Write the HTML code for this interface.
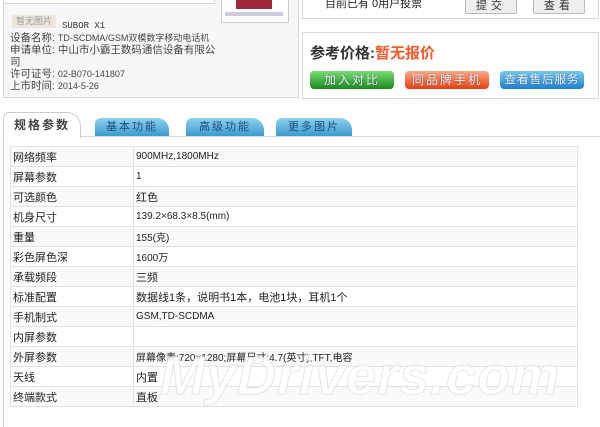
<!DOCTYPE html>
<html><head><meta charset="utf-8"><style>
body{margin:0;width:600px;height:413px;overflow:hidden;background:#fff;font-family:"Liberation Sans","Noto Sans CJK SC",sans-serif;font-size:11px;color:#333;position:relative}
.a{position:absolute}
.box{position:absolute;border:1px solid #d8d8d8;background:#f7f7f7}
.btn{position:absolute;height:18px;border-radius:4px;color:#eef;font-size:12px;text-align:center;line-height:18px;letter-spacing:2px;white-space:nowrap;overflow:hidden;text-shadow:0 0 2px rgba(0,0,0,.4)}
.tab{position:absolute;top:118px;height:18px;background:linear-gradient(#8fd0f0,#3c9ad0);color:#1b4f7a;font-size:11px;line-height:18px;text-align:center;letter-spacing:2px;border-radius:6px 12px 0 0}
table{position:absolute;left:10px;top:146px;width:568px;border-collapse:collapse;font-size:10px}
td{border:1px solid #e2e2e2;height:19px;padding:0 0 0 2px;color:#222;background:#fff}
td.l{width:120px;font-size:11px}
tr:nth-child(odd) td{background:#fafafa}
</style></head><body>
<div class="box" style="left:3px;top:-1px;width:294px;height:97px"></div>
<div class="a" style="left:3px;top:-1px;width:210px;height:3px;border:1px solid #d8d8d8;background:#fff"></div>
<div class="a" style="left:221px;top:-1px;width:66px;height:22px;border:1px solid #ccc;background:#fff"></div>
<div class="a" style="left:236px;top:-1px;width:36px;height:10px;background:#a0283a"></div>
<div class="a" style="left:225px;top:12px;width:58px;height:4px;background:#99b;opacity:.5"></div>
<div class="a" style="left:12px;top:15px;width:44px;height:13px;background:#eee8dc;color:#999;font-size:9px;line-height:13px;text-align:center">暂无图片</div>
<div class="a" style="left:62px;top:21px;font-size:9px;color:#333;font-family:'Liberation Mono',monospace">SUBOR X1</div>
<div class="a" style="left:10px;top:32px;line-height:12px;font-size:10.5px;color:#444">设备名称: <span style="font-size:9px">TD-SCDMA/GSM双模数字移动电话机</span><br>申请单位: 中山市小霸王数码通信设备有限公<br>司<br>许可证号: <span style="font-size:9px">02-B070-141807</span><br>上市时间: <span style="font-size:9px">2014-5-26</span></div>
<div class="box" style="left:302px;top:-1px;width:295px;height:18px;background:#fff"></div>
<div class="a" style="left:325px;top:-5px;font-size:11px;color:#222">目前已有 0用户投票</div>
<div class="a" style="left:465px;top:-2px;width:50px;height:14px;border:1px solid #bbb;border-radius:2px;background:#eee;font-size:11px;text-align:center;line-height:14px;letter-spacing:4px">提交</div>
<div class="a" style="left:533px;top:-2px;width:50px;height:14px;border:1px solid #bbb;border-radius:2px;background:#eee;font-size:11px;text-align:center;line-height:14px;letter-spacing:4px">查看</div>
<div class="box" style="left:302px;top:32px;width:295px;height:65px;background:#fff"></div>
<div class="a" style="left:310px;top:42px;font-size:15px;font-weight:bold;color:#333">参考价格:<span style="color:#f05a28">暂无报价</span></div>
<div class="btn" style="left:310px;top:71px;width:84px;background:linear-gradient(#7d7,#1d8a1d)">加入对比</div>
<div class="btn" style="left:405px;top:71px;width:84px;background:linear-gradient(#fa8,#e5400d)">同品牌手机</div>
<div class="btn" style="left:500px;top:71px;width:84px;letter-spacing:1px;font-size:11.5px;background:linear-gradient(#7ce,#1e7fd0)">查看售后服务</div>
<div class="a" style="left:3px;top:136px;width:600px;height:290px;border-left:1px solid #d8d8d8;border-top:1px solid #d8d8d8"></div>
<div class="a" style="left:3px;top:112px;width:76px;height:25px;background:#fff;border:1px solid #ccc;border-bottom:none;border-radius:6px 14px 0 0;font-weight:bold;font-size:12px;color:#444;line-height:25px;text-align:center;letter-spacing:2px">规格参数</div>
<div class="tab" style="left:95px;width:74px">基本功能</div>
<div class="tab" style="left:186px;width:78px">高级功能</div>
<div class="tab" style="left:276px;width:76px">更多图片</div>
<table>
<tr><td class="l">网络频率</td><td>900MHz,1800MHz</td></tr>
<tr><td class="l">屏幕参数</td><td>1</td></tr>
<tr><td class="l">可选颜色</td><td style="font-size:11px">红色</td></tr>
<tr><td class="l">机身尺寸</td><td>139.2×68.3×8.5(mm)</td></tr>
<tr><td class="l">重量</td><td>155(克)</td></tr>
<tr><td class="l">彩色屏色深</td><td>1600万</td></tr>
<tr><td class="l">承载频段</td><td style="font-size:11px">三频</td></tr>
<tr><td class="l">标准配置</td><td style="font-size:11px">数据线1条，说明书1本，电池1块，耳机1个</td></tr>
<tr><td class="l">手机制式</td><td>GSM,TD-SCDMA</td></tr>
<tr><td class="l">内屏参数</td><td></td></tr>
<tr><td class="l">外屏参数</td><td>屏幕像素:720×1280;屏幕尺寸:4.7(英寸),TFT,电容</td></tr>
<tr><td class="l">天线</td><td style="font-size:11px">内置</td></tr>
<tr><td class="l">终端款式</td><td style="font-size:11px">直板</td></tr>
</table>
<div class="a" style="left:160px;top:345px;font-size:54px;font-style:italic;font-weight:bold;color:rgba(255,255,255,.85);-webkit-text-stroke:1px rgba(205,205,205,.5);letter-spacing:1px">MyDrivers.com</div>
</body></html>
